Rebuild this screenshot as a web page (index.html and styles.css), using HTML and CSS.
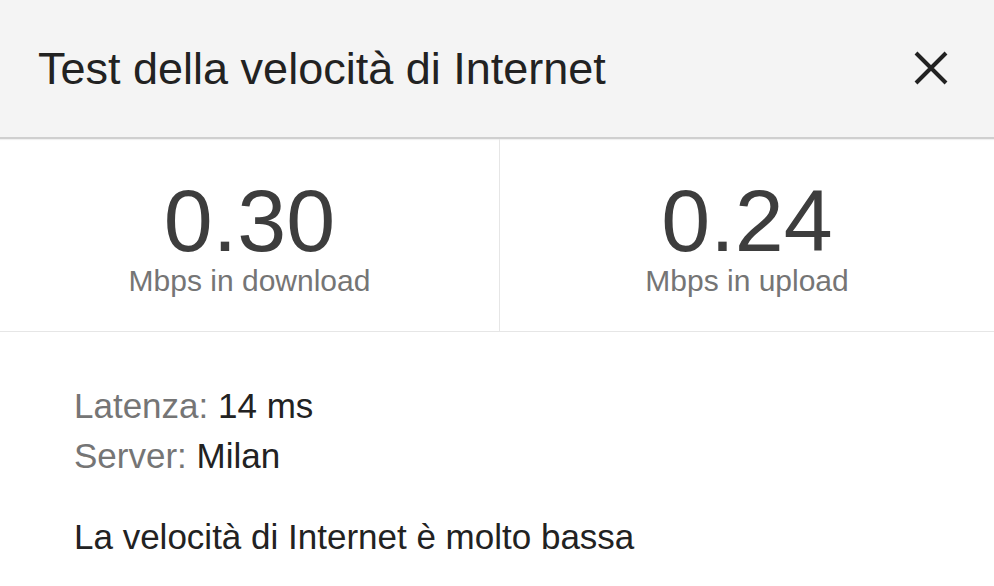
FILE: index.html
```html
<!DOCTYPE html>
<html lang="it">
<head>
<meta charset="utf-8">
<title>Test della velocità di Internet</title>
<link rel="stylesheet" href="styles.css">
</head>
<body>
<div class="panel">
  <header class="header">
    <h1 class="title">Test della velocità di Internet</h1>
    <button class="close" aria-label="Chiudi">
      <svg width="36" height="36" viewBox="0 0 36 36"><path d="M3 3 L33 33 M33 3 L3 33" stroke="#222" stroke-width="4" fill="none"/></svg>
    </button>
  </header>
  <section class="stats">
    <div class="stat">
      <div class="value">0.30</div>
      <div class="unit">Mbps in download</div>
    </div>
    <div class="stat">
      <div class="value">0.24</div>
      <div class="unit">Mbps in upload</div>
    </div>
  </section>
  <section class="details">
    <div class="row"><span class="label">Latenza:</span> 14 ms</div>
    <div class="row"><span class="label">Server:</span> Milan</div>
    <p class="summary">La velocità di Internet è molto bassa</p>
  </section>
</div>
</body>
</html>
```

FILE: styles.css
```css
html, body {
  margin: 0;
  padding: 0;
  background: #ffffff;
}
body {
  font-family: "Liberation Sans", Arial, Helvetica, sans-serif;
  color: #222222;
}
.panel {
  width: 994px;
}
.header {
  height: 137px;
  background: #f4f4f4;
  border-bottom: 2px solid #cfcfcf;
  box-shadow: 0 1px 1px rgba(0,0,0,0.06);
  display: flex;
  align-items: center;
  justify-content: space-between;
  padding: 0 45px 0 38px;
}
.title {
  margin: 0;
  font-weight: normal;
  font-size: 45px;
  line-height: 137px;
  color: #222222;
}
.close {
  border: 0;
  background: none;
  padding: 0;
  width: 36px;
  height: 36px;
  margin-top: -2px;
  display: flex;
}
.stats {
  display: grid;
  grid-template-columns: 499px 1fr;
  height: 193px;
  box-sizing: border-box;
  border-bottom: 1px solid #e6e6e6;
}
.stat {
  display: flex;
  flex-direction: column;
  align-items: center;
  padding-top: 37px;
}
.stat + .stat {
  border-left: 1px solid #e6e6e6;
}
.value {
  font-size: 88px;
  line-height: 90px;
  color: #3d3d3d;
}
.unit {
  font-size: 30px;
  line-height: 30px;
  color: #757575;
}
.details {
  padding: 49px 0 0 74px;
}
.row {
  font-size: 35px;
  line-height: 50px;
  color: #222222;
}
.label {
  color: #757575;
}
.summary {
  margin: 31px 0 0 0;
  font-size: 35px;
  line-height: 50px;
  color: #222222;
}
```
